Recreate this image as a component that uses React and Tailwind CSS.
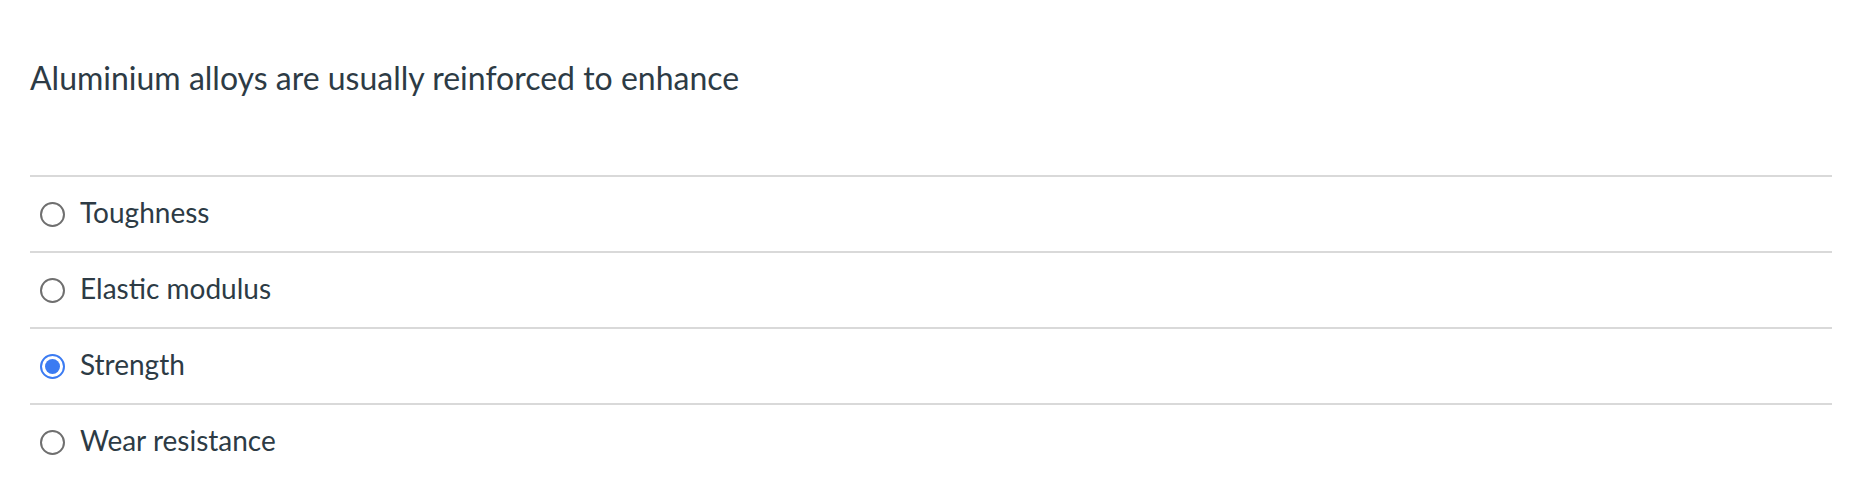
import React, { useState } from 'react'

const OPTIONS = ['Toughness', 'Elastic modulus', 'Strength', 'Wear resistance']

function Radio({ checked }) {
    return checked ? (
        <span className="flex items-center justify-center w-[25px] h-[25px] rounded-full border-2 border-[#3b7bf2] bg-white shrink-0">
            <span className="w-[15px] h-[15px] rounded-full bg-[#3b7bf2]" />
        </span>
    ) : (
        <span className="w-[25px] h-[25px] rounded-full border-2 border-[#6f6f6f] bg-white shrink-0" />
    )
}

export default function App() {
    const [selected, setSelected] = useState('Strength')
    return (
        <div className="w-[1854px] h-[496px] bg-white pl-[30px] pr-[22px] text-[#2d3b45] font-['Lato',sans-serif] overflow-hidden">
            {/* Question */}
            <div className="h-[175px] pt-[55px]">
                <p className="text-[32px] leading-[45px]">Aluminium alloys are usually reinforced to enhance</p>
            </div>

            {/* Answers */}
            {OPTIONS.map((item) => (
                <div
                    key={item}
                    onClick={() => setSelected(item)}
                    className="flex items-center h-[76px] border-t-2 border-[#d9d9d9] pl-[10px] gap-[15px] cursor-pointer"
                >
                    <Radio checked={selected === item} />
                    <span className="text-[28px] leading-[36px] -mt-[5px]">{item}</span>
                </div>
            ))}
        </div>
    )
}
